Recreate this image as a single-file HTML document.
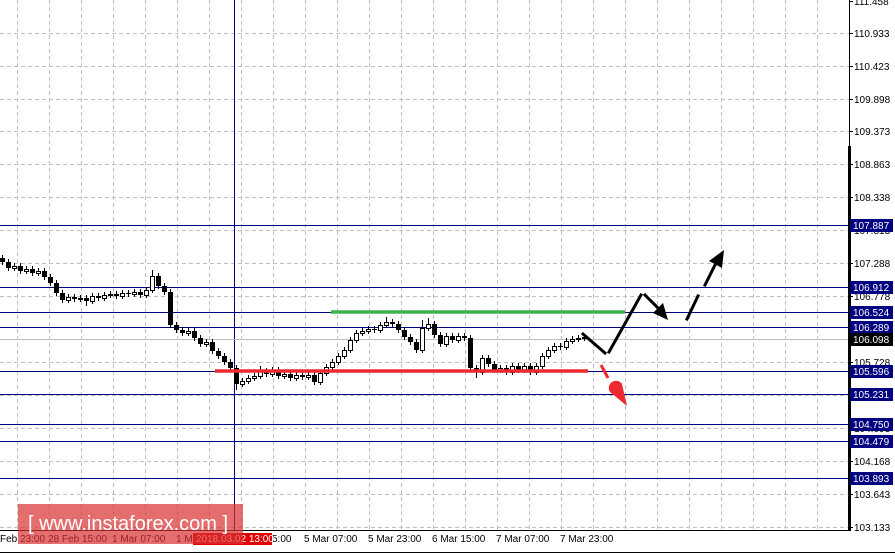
<!DOCTYPE html>
<html><head><meta charset="utf-8"><style>
html,body{margin:0;padding:0;background:#fff;width:895px;height:554px;overflow:hidden;font-family:"Liberation Sans",sans-serif}
svg{position:absolute;left:0;top:0}
</style></head><body>
<svg width="895" height="554" viewBox="0 0 895 554" xmlns="http://www.w3.org/2000/svg" font-family="Liberation Sans, sans-serif" font-size="10">
<rect width="895" height="554" fill="#fff"/>
<g stroke="#c0c0c0" stroke-dasharray="4,3" stroke-width="1">
<path d="M17.5,0V530M49.5,0V530M81.5,0V530M113.5,0V530M145.5,0V530M177.5,0V530M209.5,0V530M241.5,0V530M273.5,0V530M305.5,0V530M337.5,0V530M369.5,0V530M401.5,0V530M433.5,0V530M465.5,0V530M497.5,0V530M529.5,0V530M561.5,0V530M593.5,0V530M625.5,0V530M657.5,0V530M689.5,0V530M721.5,0V530M753.5,0V530M785.5,0V530M817.5,0V530"/>
<path d="M0,33.5H849M0,66.5H849M0,99.5H849M0,131.5H849M0,164.5H849M0,197.5H849M0,230.5H849M0,263.5H849M0,296.5H849M0,362.5H849M0,395.5H849M0,428.5H849M0,461.5H849M0,494.5H849M0,527.5H849"/>
</g>
<g stroke="#000080" stroke-width="1">
<path d="M0,225.5H849M0,287.5H849M0,312.5H849M0,327.5H849M0,371.5H849M0,394.5H849M0,424.5H849M0,441.5H849M0,478.5H849M234.5,0V530"/>
</g>
<line x1="0" y1="339.5" x2="849" y2="339.5" stroke="#c0c0c0"/>
<path stroke="#000" stroke-width="1" fill="none" d="M2.5,255V265M8.5,259V271M14.5,263V271M20.5,263V274M26.5,266V274M32.5,266V276M38.5,268V276M44.5,268V280M50.5,274V286M56.5,280V296M62.5,290V303M68.5,294V303M74.5,294V302M80.5,295V302M86.5,295V306M92.5,293V304M98.5,293V301M104.5,292V301M110.5,291V298M116.5,291V299M122.5,290V299M128.5,290V297M134.5,289V297M140.5,289V298M146.5,287V298M152.5,270V293M158.5,273V289M164.5,283V295M170.5,289V328M176.5,322V333M182.5,327V336M188.5,328V336M194.5,328V341M200.5,335V347M206.5,339V347M212.5,339V354M218.5,348V359M224.5,353V365M230.5,359V371M236.5,365V390M242.5,378V387M248.5,375V384M254.5,373V381M260.5,366V379M266.5,368V377M272.5,367V377M278.5,367V379M284.5,371V379M290.5,371V381M296.5,372V381M302.5,372V380M308.5,372V380M314.5,372V385M320.5,370V385M326.5,364V376M332.5,359V370M338.5,353V365M344.5,347V359M350.5,337V353M356.5,330V343M362.5,328V336M368.5,326V334M374.5,326V333M380.5,322V333M386.5,317V328M392.5,319V327M398.5,321V333M404.5,327V340M410.5,334V345M416.5,339V353M422.5,320V353M428.5,318V331M434.5,321V338M440.5,332V347M446.5,333V347M452.5,333V343M458.5,333V343M464.5,333V341M470.5,335V371M476.5,365V378M482.5,355V375M488.5,355V367M494.5,361V373M500.5,365V373M506.5,365V375M512.5,363V375M518.5,363V373M524.5,363V373M530.5,363V375M536.5,363V375M542.5,353V369M548.5,347V359M554.5,343V353M560.5,343V350M566.5,338V350M572.5,336V344M578.5,335V342M584.5,334V341"/>
<path fill="#000" d="M0,258h5V262h-5ZM6,262h5V268h-5ZM18,266h5V271h-5ZM30,269h5V273h-5ZM42,271h5V277h-5ZM48,277h5V283h-5ZM54,283h5V293h-5ZM60,293h5V300h-5ZM72,297h5V299h-5ZM84,298h5V301h-5ZM96,296h5V298h-5ZM114,294h5V296h-5ZM126,293h5V294h-5ZM138,292h5V295h-5ZM156,276h5V286h-5ZM162,286h5V292h-5ZM168,292h5V325h-5ZM174,325h5V330h-5ZM180,330h5V333h-5ZM192,331h5V338h-5ZM198,338h5V344h-5ZM210,342h5V351h-5ZM216,351h5V356h-5ZM222,356h5V362h-5ZM228,362h5V368h-5ZM234,368h5V384h-5ZM264,371h5V374h-5ZM276,370h5V376h-5ZM288,374h5V378h-5ZM300,375h5V377h-5ZM312,375h5V382h-5ZM372,329h5V330h-5ZM390,322h5V324h-5ZM396,324h5V330h-5ZM402,330h5V337h-5ZM408,337h5V342h-5ZM414,342h5V350h-5ZM432,324h5V335h-5ZM438,335h5V344h-5ZM450,336h5V340h-5ZM462,336h5V338h-5ZM468,338h5V368h-5ZM474,368h5V372h-5ZM486,358h5V364h-5ZM492,364h5V370h-5ZM504,368h5V372h-5ZM516,366h5V370h-5ZM528,366h5V372h-5ZM558,346h5V347h-5Z"/>
<path fill="#fff" stroke="#000" stroke-width="1" d="M12.5,266.5h4V268.5h-4ZM24.5,269.5h4V271.5h-4ZM36.5,271.5h4V273.5h-4ZM66.5,297.5h4V300.5h-4ZM78.5,298.5h4V299.5h-4ZM90.5,296.5h4V301.5h-4ZM102.5,295.5h4V298.5h-4ZM108.5,294.5h4V295.5h-4ZM120.5,293.5h4V296.5h-4ZM132.5,292.5h4V294.5h-4ZM144.5,290.5h4V295.5h-4ZM150.5,276.5h4V290.5h-4ZM186.5,331.5h4V333.5h-4ZM204.5,342.5h4V344.5h-4ZM240.5,381.5h4V384.5h-4ZM246.5,378.5h4V381.5h-4ZM252.5,376.5h4V378.5h-4ZM258.5,371.5h4V376.5h-4ZM270.5,370.5h4V374.5h-4ZM282.5,374.5h4V376.5h-4ZM294.5,375.5h4V378.5h-4ZM306.5,375.5h4V377.5h-4ZM318.5,373.5h4V382.5h-4ZM324.5,367.5h4V373.5h-4ZM330.5,362.5h4V367.5h-4ZM336.5,356.5h4V362.5h-4ZM342.5,350.5h4V356.5h-4ZM348.5,340.5h4V350.5h-4ZM354.5,333.5h4V340.5h-4ZM360.5,331.5h4V333.5h-4ZM366.5,329.5h4V331.5h-4ZM378.5,325.5h4V330.5h-4ZM384.5,322.5h4V325.5h-4ZM420.5,328.5h4V350.5h-4ZM426.5,324.5h4V328.5h-4ZM444.5,336.5h4V344.5h-4ZM456.5,336.5h4V340.5h-4ZM480.5,358.5h4V372.5h-4ZM498.5,368.5h4V370.5h-4ZM510.5,366.5h4V372.5h-4ZM522.5,366.5h4V370.5h-4ZM534.5,366.5h4V372.5h-4ZM540.5,356.5h4V366.5h-4ZM546.5,350.5h4V356.5h-4ZM552.5,346.5h4V350.5h-4ZM564.5,341.5h4V347.5h-4ZM570.5,339.5h4V341.5h-4ZM576.5,338.5h4V339.5h-4ZM582.5,337.5h4V338.5h-4Z"/>
<line x1="331" y1="312" x2="625" y2="312" stroke="#3cb44b" stroke-width="3.5"/>
<line x1="215" y1="371" x2="588" y2="371" stroke="#ee2a30" stroke-width="3.5"/>
<g stroke="#000" stroke-width="3" fill="none" stroke-linecap="square">
<polyline points="583,334 605,353"/>
<polyline points="609,352 641,295"/>
<polyline points="645,295 660,310"/>
<polyline points="687,319 698,296"/>
<polyline points="705,285 716,263"/>
</g>
<polygon points="668,320 653,313 663,303" fill="#000"/>
<polygon points="724,250 722,268 709,261" fill="#000"/>
<line x1="601" y1="365" x2="608" y2="378" stroke="#ee2a30" stroke-width="3"/>
<path d="M627,406 L610,392 A7,7 0 1 1 622,384 Z" fill="#ee2a30"/>
<line x1="849.5" y1="0" x2="849.5" y2="530" stroke="#000"/>
<rect x="848" y="146" width="3" height="384" fill="#000"/>
<line x1="0" y1="530.5" x2="851" y2="530.5" stroke="#000"/>
<path stroke="#000" d="M849,1.5h4M849,33.5h4M849,66.5h4M849,99.5h4M849,131.5h4M849,164.5h4M849,197.5h4M849,230.5h4M849,263.5h4M849,296.5h4M849,362.5h4M849,395.5h4M849,428.5h4M849,461.5h4M849,494.5h4M849,527.5h4"/>
<g fill="#000">
<text x="854" y="5">111.458</text><text x="854" y="37">110.933</text><text x="854" y="70">110.423</text><text x="854" y="103">109.898</text><text x="854" y="135">109.373</text><text x="854" y="168">108.863</text><text x="854" y="201">108.338</text><text x="854" y="234">107.813</text><text x="854" y="267">107.288</text><text x="854" y="300">106.778</text><text x="854" y="366">105.728</text><text x="854" y="399">105.203</text><text x="854" y="432">104.693</text><text x="854" y="465">104.168</text><text x="854" y="498">103.643</text><text x="854" y="531">103.133</text>
</g>
<g fill="#000080">
<rect x="850" y="219" width="43" height="13"/><rect x="850" y="281" width="43" height="13"/><rect x="850" y="306" width="43" height="13"/><rect x="850" y="321" width="43" height="13"/><rect x="850" y="365" width="43" height="13"/><rect x="850" y="388" width="43" height="13"/><rect x="850" y="418" width="43" height="13"/><rect x="850" y="435" width="43" height="13"/><rect x="850" y="472" width="43" height="13"/>
</g>
<rect x="850" y="333" width="43" height="13" fill="#000"/>
<g fill="#fff">
<text x="853" y="229">107.887</text><text x="853" y="291">106.912</text><text x="853" y="316">106.524</text><text x="853" y="331">106.289</text><text x="853" y="343">106.098</text><text x="853" y="375">105.596</text><text x="853" y="398">105.231</text><text x="853" y="428">104.750</text><text x="853" y="445">104.479</text><text x="853" y="482">103.893</text>
</g>
<g fill="#000">
<text x="0" y="542">Feb 23:00</text><text x="48" y="542">28 Feb 15:00</text><text x="112" y="542">1 Mar 07:00</text><text x="176" y="542">1 M</text>
<text x="272" y="542">5:00</text>
<text x="304" y="542">5 Mar 07:00</text><text x="368" y="542">5 Mar 23:00</text><text x="432" y="542">6 Mar 15:00</text><text x="496" y="542">7 Mar 07:00</text><text x="560" y="542">7 Mar 23:00</text>
</g>
<rect x="193" y="533" width="79" height="12" fill="#e00000"/>
<text x="196" y="542" fill="#fff">2018.03.02 13:00</text>
<rect x="18" y="504" width="225" height="40" fill="#d83030" fill-opacity="0.7"/>
<text x="28" y="530" fill="#fff" font-size="20">[ www.instaforex.com ]</text>
<line x1="0" y1="552.5" x2="895" y2="552.5" stroke="#000"/>
</svg>
</body></html>
